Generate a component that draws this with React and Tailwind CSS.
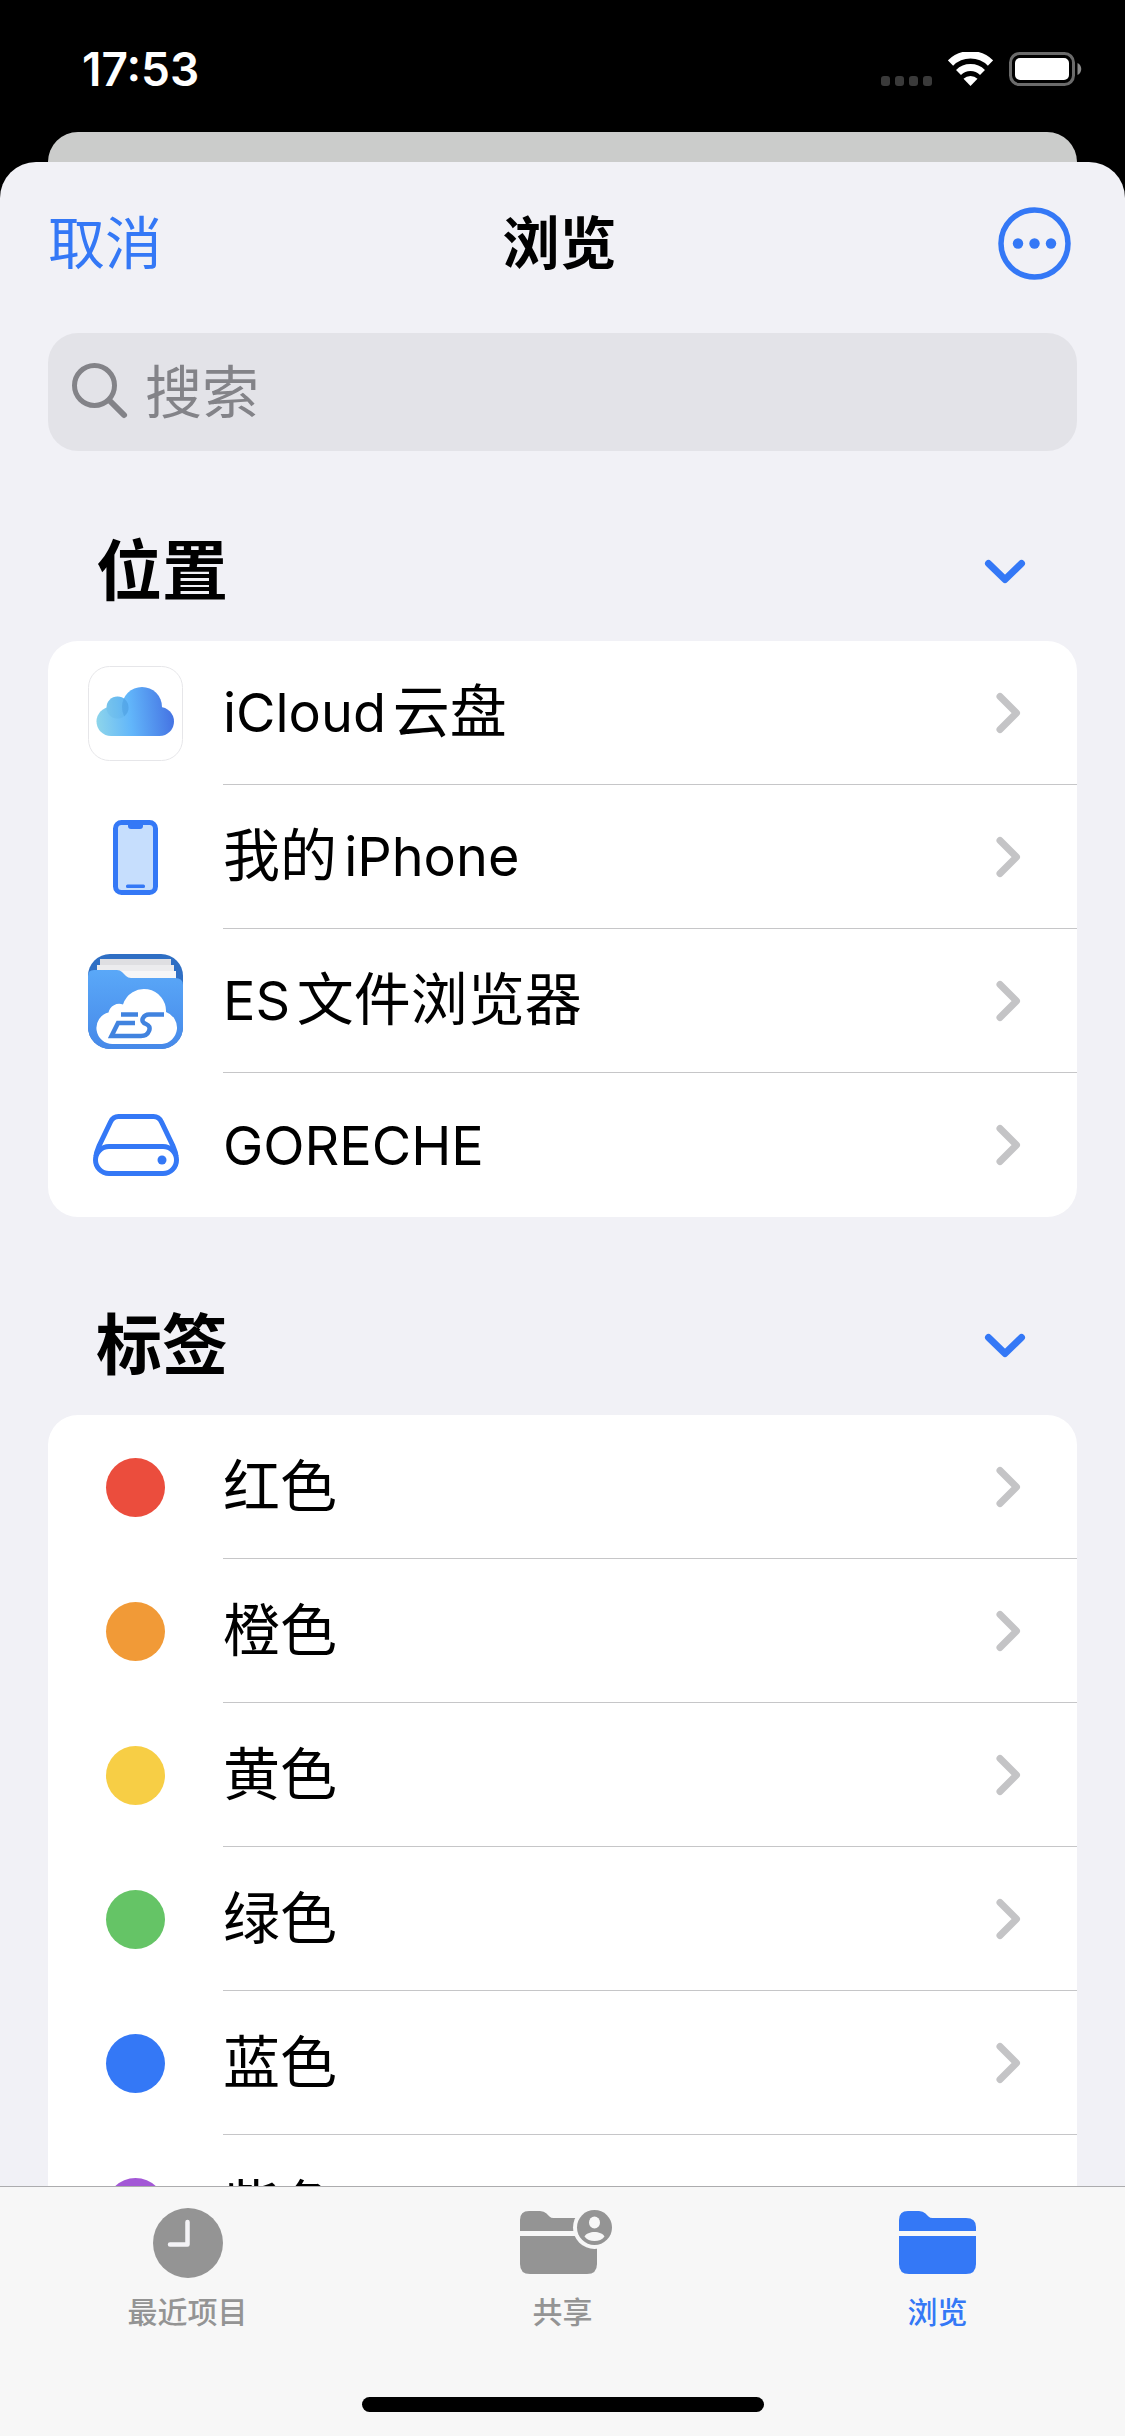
import React from 'react';

const FONT = "font-['Inter','Noto_Sans_CJK_SC',sans-serif]";

const StatusBar = () => (
  <div className="flex h-[132px] shrink-0 items-center justify-between pt-[6px] pl-[82px] pr-[42px] text-white">
    <time className="text-[46px] leading-none font-semibold">17:53</time>
    <div className="flex items-center gap-[16px]">
      <svg className="h-[34px] w-[51px]" viewBox="0 0 51 34" fill="#3a3a3a" aria-hidden="true">
        <rect x="0" y="24" width="9" height="10" rx="3" />
        <rect x="14" y="24" width="9" height="10" rx="3" />
        <rect x="28" y="24" width="9" height="10" rx="3" />
        <rect x="42" y="24" width="9" height="10" rx="3" />
      </svg>
      <svg className="h-[34px] w-[45px]" viewBox="0 0 45 34" fill="none" aria-label="Wi-Fi">
        <path d="M2.500 11a28.500 28.500 0 0 1 40 0" stroke="#fff" strokeWidth="7.500" />
        <path d="M10.500 20.500a17 17 0 0 1 24 0" stroke="#fff" strokeWidth="7" />
        <path d="M22.500 34l-7-7.300a10.500 10.500 0 0 1 14 0z" fill="#fff" />
      </svg>
      <svg className="h-[34px] w-[74px]" viewBox="0 0 74 34" fill="none" aria-label="电池">
        <rect x="1.500" y="1.500" width="63" height="31" rx="9" stroke="#6b6b6b" strokeWidth="3" />
        <rect x="6" y="6" width="54" height="22" rx="5" fill="#fff" />
        <path d="M68.500 11c5 2 5 10 0 12z" fill="#8a8a8a" />
      </svg>
    </div>
  </div>
);

const ICloudIcon = () => (
  <svg className="h-[95px] w-[95px]" viewBox="0 0 95 95" aria-hidden="true">
    <defs>
      <linearGradient id="cloud" x1="8" y1="62" x2="86" y2="54" gradientUnits="userSpaceOnUse">
        <stop offset="0" stopColor="#8fd6ea" />
        <stop offset="0.450" stopColor="#62b6fa" />
        <stop offset="1" stopColor="#4573e3" />
      </linearGradient>
      <clipPath id="cloud-main">
        <circle cx="54" cy="41" r="20" />
      </clipPath>
    </defs>
    <rect x="0.500" y="0.500" width="94" height="94" rx="21" fill="#fff" stroke="#e6e6e9" />
    <g fill="url(#cloud)">
      <circle cx="23" cy="55.500" r="14.500" />
      <circle cx="29.500" cy="41.500" r="11" />
      <circle cx="54" cy="41" r="20" />
      <circle cx="71.500" cy="55.500" r="14.500" />
      <path d="M23 45h48v25H23z" />
    </g>
    <circle cx="29.500" cy="41.500" r="11" fill="#4a9fd8" opacity="0.150" />
    <circle cx="29.500" cy="41.500" r="11" fill="#3f8fd8" opacity="0.350" clipPath="url(#cloud-main)" />
  </svg>
);

const PhoneIcon = () => (
  <svg className="h-[75px] w-[45px]" viewBox="0 0 45 75" aria-hidden="true">
    <rect x="2.500" y="2.500" width="40" height="70" rx="6" fill="#c6defd" stroke="#3478f6" strokeWidth="5" />
    <path d="M15 3h15v3q0 3-3 3h-9q-3 0-3-3z" fill="#3478f6" />
    <rect x="13" y="64.500" width="19" height="3.500" rx="1.500" fill="#3478f6" />
  </svg>
);

const ESIcon = () => (
  <svg className="h-[95px] w-[95px]" viewBox="0 0 95 95" aria-hidden="true">
    <defs>
      <clipPath id="es-clip">
        <rect width="95" height="95" rx="22" />
      </clipPath>
      <linearGradient id="es-front" x1="0" y1="0" x2="0" y2="1">
        <stop offset="0" stopColor="#5aa8f8" />
        <stop offset="1" stopColor="#4689e9" />
      </linearGradient>
    </defs>
    <g clipPath="url(#es-clip)">
      <rect width="95" height="95" fill="#2f6fc4" />
      <path d="M12 5h71v20H12z" fill="#dfdfe2" />
      <path d="M9 11h77v20H9z" fill="#ececee" />
      <path d="M30 17h58v20H30z" fill="#f6f6f7" />
      <path d="M0 22q0-6 6-6h23q3 0 5 2l4 4q2 2 5 2h44q8 0 8 7v64H0z" fill="url(#es-front)" />
      <path
        d="M25 90A16 16 0 0 1 20.500 58.500A11 11 0 0 1 35 50.500A22 22 0 0 1 78 58A16.500 16.500 0 0 1 74 90z"
        fill="#fff"
      />
      <g fill="none" stroke="#4183df" strokeWidth="4.500">
        <path d="M50 60.500H33" />
        <path d="M47 69H30L23.500 82H53q6 0 8-5 2-5-3-7-5-2-3-6 2-3.500 6-3.500h15" />
      </g>
    </g>
  </svg>
);

const DriveIcon = () => (
  <svg className="h-[62px] w-[86px]" viewBox="0 0 86 62" fill="none" stroke="#3478f6" strokeWidth="5" aria-hidden="true">
    <rect x="2.500" y="32.500" width="81" height="27" rx="13.500" />
    <path d="M3 42c0-4 2-7 3.500-11l11-23q2.500-5.500 8-5.500h35q5.500 0 8 5.500l11 23c1.500 4 3.500 7 3.500 11" />
    <circle cx="69" cy="46" r="4.500" fill="#3478f6" stroke="none" />
  </svg>
);

const FolderShape = () => (
  <>
    <path d="M0 21v-11q0-9 9-9h11q4 0 6.500 2.500l3 3q1.500 1.500 4 1.500H67q10 0 10 9v4z" />
    <path d="M0 26h77v28q0 10-10 10H10q-10 0-10-10z" />
  </>
);

const ClockIcon = () => (
  <svg className="h-[70px] w-[70px]" viewBox="0 0 70 70" aria-hidden="true">
    <circle cx="35" cy="35" r="35" fill="#949494" />
    <path d="M34.500 14v22.500H17" fill="none" stroke="#f4f3f6" strokeWidth="4.500" strokeLinecap="round" strokeLinejoin="round" />
  </svg>
);

const SharedIcon = () => (
  <svg className="h-[70px] w-[98px]" viewBox="-6 -2 98 70" aria-hidden="true">
    <g fill="#949494">
      <FolderShape />
    </g>
    <circle cx="74.500" cy="17.500" r="21.500" fill="#f7f7f7" />
    <circle cx="74.500" cy="17.500" r="17.500" fill="#949494" />
    <ellipse cx="74.500" cy="12.500" rx="5.500" ry="6" fill="#f7f7f7" />
    <path d="M64.500 26.500c3-6 17-6 20 0c-4 6-16 6-20 0z" fill="#f7f7f7" />
  </svg>
);

const BrowseIcon = () => (
  <svg className="h-[70px] w-[77px]" viewBox="0 -2 77 70" fill="#3478f6" aria-hidden="true">
    <FolderShape />
  </svg>
);

const Dot = ({ color }) => <span className={`h-[59px] w-[59px] rounded-full ${color}`} />;

const LOCATIONS = [
  { name: 'iCloud云盘', icon: <ICloudIcon /> },
  { name: '我的iPhone', icon: <PhoneIcon /> },
  { name: 'ES文件浏览器', icon: <ESIcon /> },
  { name: 'GORECHE', icon: <DriveIcon /> },
];

const TAGS = [
  { name: '红色', icon: <Dot color="bg-[#eb4d3d]" /> },
  { name: '橙色', icon: <Dot color="bg-[#f19a37]" /> },
  { name: '黄色', icon: <Dot color="bg-[#f7ce45]" /> },
  { name: '绿色', icon: <Dot color="bg-[#65c466]" /> },
  { name: '蓝色', icon: <Dot color="bg-[#3478f6]" /> },
  { name: '紫色', icon: <Dot color="bg-[#a358d6]" /> },
];

// Latin runs are set a little smaller than the Chinese around them
const MixedText = ({ text }) =>
  text.split(/([A-Za-z]+)/).map((run, i) =>
    i % 2 ? (
      <span key={i} className="text-[54px]">{run}</span>
    ) : (
      run
    )
  );

const Row = ({ name, icon }) => (
  <li className="group">
    <a href="#" className="flex h-[144px] items-center">
      <span className="flex w-[175px] shrink-0 items-center justify-center">{icon}</span>
      <span className="flex h-full min-w-0 flex-1 items-center justify-between border-b border-[#c6c6c8] pr-[56px] group-last:border-b-0">
        <span className="truncate text-[57px] leading-[82px]">
          <MixedText text={name} />
        </span>
        <svg className="h-[42px] w-[26px] shrink-0" viewBox="0 0 26 42" fill="none" aria-hidden="true">
          <path d="M5 4.500L21.500 21L5 37.500" stroke="#c4c4c6" strokeWidth="7" strokeLinecap="round" strokeLinejoin="round" />
        </svg>
      </span>
    </a>
  </li>
);

const Section = ({ title, items }) => (
  <section>
    <div className="flex items-center justify-between pt-[35px] pb-[25px] pl-[48px] pr-[51px]">
      <h2 className="text-[66px] leading-[90px] font-bold">{title}</h2>
      <button type="button" aria-label={`收起${title}`}>
        <svg className="h-[26px] w-[42px]" viewBox="0 0 42 26" fill="none" aria-hidden="true">
          <path d="M4.500 5.500L21 21.500L37.500 5.500" stroke="#3478f6" strokeWidth="7" strokeLinecap="round" strokeLinejoin="round" />
        </svg>
      </button>
    </div>
    <ul className="overflow-hidden rounded-[30px] bg-white">
      {items.map((item) => (
        <Row key={item.name} {...item} />
      ))}
    </ul>
  </section>
);

const TABS = [
  { label: '最近项目', icon: <ClockIcon /> },
  { label: '共享', icon: <SharedIcon /> },
  { label: '浏览', icon: <BrowseIcon />, active: true },
];

const TabBar = () => (
  <footer className="shrink-0 border-t border-[#acacae] bg-[#f7f7f7] pb-[24px]">
    <nav className="grid grid-cols-3 pt-[21px]">
      {TABS.map(({ label, icon, active }) => (
        <a
          key={label}
          href="#"
          aria-current={active ? 'page' : undefined}
          className={`flex flex-col items-center gap-[12px] ${active ? 'text-[#3478f6]' : 'text-[#949494]'}`}
        >
          {icon}
          <span className="text-[30px] leading-[44px] font-medium">{label}</span>
        </a>
      ))}
    </nav>
    <div className="mx-auto mt-[63px] h-[15px] w-[402px] rounded-full bg-black" />
  </footer>
);

export default function App() {
  return (
    <div className={`flex h-screen flex-col overflow-hidden bg-black text-black [text-autospace:normal] ${FONT}`}>
      <StatusBar />
      <div className="mx-[48px] h-[30px] shrink-0 rounded-t-[30px] bg-[#cbcccb]" />

      <main className="flex min-h-0 flex-1 flex-col overflow-hidden rounded-t-[36px] bg-[#f1f1f6]">
        <header className="grid h-[162px] shrink-0 grid-cols-3 items-center pl-[48px] pr-[54px]">
          <button type="button" className="justify-self-start pt-[2px] text-[57px] leading-[82px] text-[#3478f6]">
            取消
          </button>
          <h1 className="justify-self-center pt-[2px] text-[57px] leading-[82px] font-bold">浏览</h1>
          <button type="button" aria-label="更多" className="justify-self-end">
            <svg className="h-[73px] w-[73px]" viewBox="0 0 73 73" fill="#3478f6" aria-hidden="true">
              <circle cx="36.500" cy="36.500" r="33.500" fill="none" stroke="#3478f6" strokeWidth="5.500" />
              <circle cx="20" cy="36.500" r="5.200" />
              <circle cx="36.500" cy="36.500" r="5.200" />
              <circle cx="53" cy="36.500" r="5.200" />
            </svg>
          </button>
        </header>

        <div className="min-h-0 flex-1 overflow-y-auto px-[48px] pt-[9px] [scrollbar-width:none]">
          <label className="mb-[40px] flex h-[118px] items-center gap-[16px] rounded-[30px] bg-[#e3e3e8] pl-[23px]">
            <svg className="h-[58px] w-[58px] shrink-0" viewBox="0 0 58 58" fill="none" stroke="#838388" aria-hidden="true">
              <circle cx="23.500" cy="22.500" r="20" strokeWidth="5" />
              <path d="M38.500 37.500L53 52" strokeWidth="6" strokeLinecap="round" />
            </svg>
            <input
              type="search"
              aria-label="搜索"
              placeholder="搜索"
              className="min-w-0 flex-1 bg-transparent pt-[2px] text-[57px] leading-[82px] outline-none placeholder:text-[#838388]"
            />
          </label>

          <Section title="位置" items={LOCATIONS} />
          <div className="h-[48px]" />
          <Section title="标签" items={TAGS} />
        </div>
      </main>

      <TabBar />
    </div>
  );
}
